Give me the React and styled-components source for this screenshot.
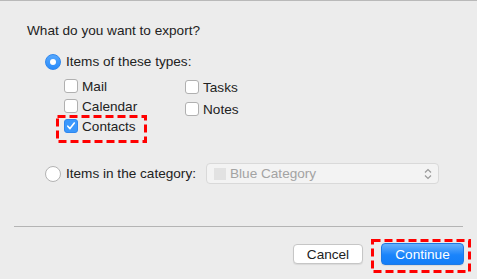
import React from 'react';
import styled, { createGlobalStyle } from 'styled-components';

const GlobalStyle = createGlobalStyle`
  html, body {
    margin: 0;
    padding: 0;
    background: #ececec;
  }
  body {
    font-family: "Liberation Sans", Arial, sans-serif;
    font-size: 13.6px;
    color: #222;
  }
`;

const Dialog = styled.div`
  width: 477px;
  height: 279px;
  box-sizing: border-box;
  border-top: 1px solid #b9b9b9;
  background: #ececec;
  padding-top: 22px;
  display: flex;
  flex-direction: column;
`;

const Title = styled.div`
  margin-left: 27px;
  line-height: 16px;
  height: 16px;
`;

const RadioRow = styled.label`
  display: flex;
  align-items: center;
  gap: 5px;
  margin-left: 45px;
  margin-top: ${(p) => p.$top}px;
  width: ${(p) => (p.$width ? `${p.$width}px` : 'auto')};
  line-height: 16px;
`;

const RadioDot = styled.span`
  width: 16px;
  height: 16px;
  box-sizing: border-box;
  border-radius: 50%;
  flex: none;
  display: flex;
  align-items: center;
  justify-content: center;
  background: ${(p) => (p.$on ? 'linear-gradient(#55a7fd, #2a8cfb)' : '#fff')};
  border: 1px solid ${(p) => (p.$on ? '#2f87ee' : '#b3b3b3')};
  &::after {
    content: '';
    display: ${(p) => (p.$on ? 'block' : 'none')};
    width: 6px;
    height: 6px;
    border-radius: 50%;
    background: #fff;
  }
`;

const Types = styled.div`
  display: flex;
  margin-left: 64px;
  margin-top: 6px;
`;

const Column = styled.div`
  display: flex;
  flex-direction: column;
  width: ${(p) => p.$width}px;
`;

const CheckRow = styled.label`
  position: relative;
  display: flex;
  align-items: center;
  gap: 4px;
  height: ${(p) => p.$h}px;
`;

const Box = styled.span`
  width: 14px;
  height: 14px;
  box-sizing: border-box;
  border-radius: 3px;
  flex: none;
  display: flex;
  align-items: center;
  justify-content: center;
  background: ${(p) => (p.$on ? '#3b98fc' : '#fff')};
  border: 1px solid ${(p) => (p.$on ? '#2f87ee' : '#b0b0b0')};
`;

const DashedFrame = styled.svg`
  position: absolute;
  left: ${(p) => p.$l}px;
  top: ${(p) => p.$t}px;
  pointer-events: none;
  overflow: visible;
`;

const Popup = styled.div`
  margin-left: auto;
  width: 233px;
  height: 21px;
  box-sizing: border-box;
  border: 1px solid #d9d9d9;
  border-radius: 4px;
  background: #f3f3f3;
  display: flex;
  align-items: center;
  padding-left: 7px;
  padding-right: 6px;
  gap: 4px;
  color: #a3a3a3;
`;

const Swatch = styled.span`
  width: 12px;
  height: 12px;
  background: #e2e2e2;
  flex: none;
`;

const PopupText = styled.span`
  flex: 1;
`;

const Separator = styled.div`
  margin: 0 14px;
  margin-top: ${(p) => p.$top}px;
  height: 1px;
  background: #b4b4b4;
`;

const Buttons = styled.div`
  display: flex;
  justify-content: flex-end;
  align-items: center;
  gap: 18px;
  padding-right: 13px;
  margin-top: 16px;
`;

const Button = styled.button`
  font: inherit;
  height: ${(p) => (p.$primary ? 22 : 20)}px;
  width: ${(p) => p.$w}px;
  box-sizing: border-box;
  border-radius: 4px;
  padding: 0;
  color: ${(p) => (p.$primary ? '#fff' : '#222')};
  background: ${(p) => (p.$primary ? 'linear-gradient(#69b1fc, #1a84fb 55%, #137ef8)' : '#fff')};
  border: 1px solid ${(p) => (p.$primary ? '#1f7ae4' : '#c6c6c6')};
  box-shadow: 0 1px 1px rgba(0, 0, 0, 0.08);
`;

const PrimaryWrap = styled.div`
  position: relative;
  display: flex;
`;

const Check = () => (
  <svg width="10" height="10" viewBox="0 0 10 10">
    <path d="M1.8 5.2 L4 7.6 L8.3 2" fill="none" stroke="#fff" strokeWidth="1.6" strokeLinecap="round" strokeLinejoin="round" />
  </svg>
);

const Chevrons = () => (
  <svg width="8" height="12" viewBox="0 0 8 12">
    <path d="M1 4.5 L4 1.5 L7 4.5 M1 7.5 L4 10.5 L7 7.5" fill="none" stroke="#9a9a9a" strokeWidth="1.2" />
  </svg>
);

const Frame = ({ l, t, w, h }) => (
  <DashedFrame $l={l} $t={t} width={w} height={h}>
    <rect x="1.5" y="1.5" width={w - 3} height={h - 3} fill="none" stroke="#ff0000" strokeWidth="3" strokeDasharray="8 4" />
  </DashedFrame>
);

const CheckItem = ({ label, on, h, children }) => (
  <CheckRow $h={h}>
    <Box $on={on}>{on && <Check />}</Box>
    {label}
    {children}
  </CheckRow>
);

export default function App() {
  return (
    <>
      <GlobalStyle />
      <Dialog>
        <Title>What do you want to export?</Title>
        <RadioRow $top={15}>
          <RadioDot $on />
          Items of these types:
        </RadioRow>
        <Types>
          <Column $width={121}>
            <CheckItem label="Mail" h={20} />
            <CheckItem label="Calendar" h={20} />
            <CheckItem label="Contacts" on h={20}>
              <Frame l={-8} t={-1} w={91} h={28} />
            </CheckItem>
          </Column>
          <Column $width={100}>
            <CheckItem label="Tasks" h={22} />
            <CheckItem label="Notes" h={22} />
          </Column>
        </Types>
        <RadioRow $top={27} $width={394}>
          <RadioDot />
          Items in the category:
          <Popup>
            <Swatch />
            <PopupText>Blue Category</PopupText>
            <Chevrons />
          </Popup>
        </RadioRow>
        <Separator $top={42} />
        <Buttons>
          <Button $w={70}>Cancel</Button>
          <PrimaryWrap>
            <Button $primary $w={83}>Continue</Button>
            <Frame l={-10} t={-4} w={100} h={34} />
          </PrimaryWrap>
        </Buttons>
      </Dialog>
    </>
  );
}
